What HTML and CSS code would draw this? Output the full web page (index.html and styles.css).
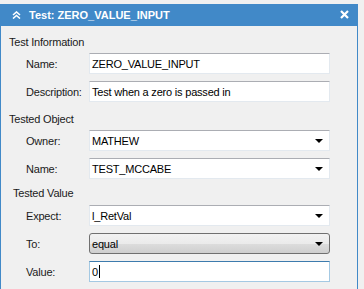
FILE: index.html
```html
<!DOCTYPE html>
<html lang="en">
<head>
<meta charset="UTF-8">
<title>Test: ZERO_VALUE_INPUT</title>
<link rel="stylesheet" href="styles.css">
</head>
<body>
<div class="panel">
    <div class="titlebar">
        <svg class="collapse" width="9" height="8" viewBox="0 0 9 8">
            <path d="M1 4 L4.5 1 L8 4 M1 7.5 L4.5 4.5 L8 7.5" fill="none" stroke="#fff" stroke-width="1.6"/>
        </svg>
        <span class="title">Test: ZERO_VALUE_INPUT</span>
        <svg class="close" width="9" height="9" viewBox="0 0 9 9">
            <path d="M1 1 L8 8 M8 1 L1 8" stroke="#fff" stroke-width="2.2"/>
        </svg>
    </div>
    <div class="content">
        <div class="section first">
            <div class="heading">Test Information</div>
            <div class="row">
                <label>Name:</label>
                <div class="field">ZERO_VALUE_INPUT</div>
            </div>
            <div class="row">
                <label>Description:</label>
                <div class="field">Test when a zero is passed in</div>
            </div>
        </div>
        <div class="section second">
            <div class="heading">Tested Object</div>
            <div class="row">
                <label>Owner:</label>
                <div class="field combo">MATHEW<span class="arrow"></span></div>
            </div>
            <div class="row">
                <label>Name:</label>
                <div class="field combo">TEST_MCCABE<span class="arrow"></span></div>
            </div>
        </div>
        <div class="section third">
            <div class="heading indent">Tested Value</div>
            <div class="row">
                <label>Expect:</label>
                <div class="field combo">l_RetVal<span class="arrow"></span></div>
            </div>
            <div class="row">
                <label>To:</label>
                <div class="field button">equal<span class="arrow"></span></div>
            </div>
            <div class="row">
                <label>Value:</label>
                <div class="field focused">0<span class="caret"></span></div>
            </div>
        </div>
    </div>
</div>
</body>
</html>
```
FILE: styles.css
```css
body {
    margin: 0;
    background-color: #f0f0f0;
    font-family: "Liberation Sans", Arial, sans-serif;
    font-size: 11px;
    color: #1a1a1a;
    overflow: hidden;
}
.panel {
    margin-top: 4px;
    width: 356px;
    height: 285px;
    border-left: 1px solid #4189c8;
    border-right: 1px solid #4189c8;
    background-color: #f0f0f0;
}
.titlebar {
    display: flex;
    align-items: center;
    height: 22px;
    background-color: #4189c8;
    color: #fff;
}
.collapse {
    margin-left: 11px;
    margin-right: 8px;
}
.title {
    font-weight: bold;
    font-size: 11px;
    flex: 1;
}
.close {
    margin-right: 8px;
    margin-top: -2px;
}
.content {
    padding-left: 8px;
    letter-spacing: -0.2px;
}
.section {
    display: flex;
    flex-direction: column;
    gap: 7px;
}
.section.first {
    padding-top: 8px;
}
.section.second {
    margin-top: 9px;
}
.section.third {
    margin-top: 6px;
}
.heading {
    height: 16px;
    line-height: 16px;
    margin-bottom: -4px;
}
.heading.indent {
    padding-left: 4px;
}
.section.third .heading {
    margin-bottom: -3px;
}
.row {
    display: flex;
    align-items: center;
    padding-left: 17px;
}
.row label {
    width: 63px;
}
.field {
    display: flex;
    align-items: center;
    box-sizing: border-box;
    width: 241px;
    height: 21px;
    padding-left: 2px;
    padding-right: 6px;
    background-color: #fff;
    border: 1px solid #e3e9ef;
    border-top-color: #abadb3;
    color: #000;
}
.combo, .button {
    justify-content: space-between;
}
.arrow {
    width: 0;
    height: 0;
    border-left: 4px solid transparent;
    border-right: 4px solid transparent;
    border-top: 4px solid #000;
}
.button {
    border: 1px solid #707070;
    border-radius: 3px;
    background: linear-gradient(#f2f2f2 0%, #ebebeb 50%, #dddddd 51%, #cfcfcf 100%);
}
.focused {
    border-color: #a4c9e3;
    border-top-color: #3d7bad;
}
.caret {
    width: 1px;
    height: 13px;
    margin-left: 1px;
    background-color: #000;
}
```
